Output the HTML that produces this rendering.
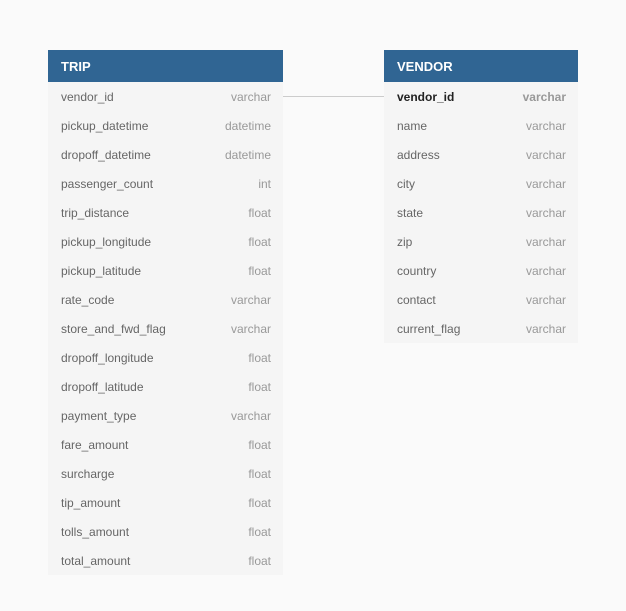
<!DOCTYPE html>
<html><head><style>
body{margin:0;width:626px;height:611px;background:#fafafa;font-family:"Liberation Sans",sans-serif;position:relative;overflow:hidden}
.t{position:absolute;top:50px;background:#f5f5f5}
.h{height:32px;background:#306593;color:#fff;font-weight:bold;font-size:13px;line-height:34px;padding-left:13px}
.r{height:29px;line-height:31px;font-size:12px;color:#666;padding:0 12px 0 13px;display:flex;justify-content:space-between}
.r span:last-child{color:#999}
.k{color:#222!important;font-weight:bold}
.k span:last-child{color:#999}
</style></head><body>
<div style="position:absolute;left:283px;top:96px;width:101px;height:1px;background:#ccc"></div>
<div class="t" style="left:48px;width:235px">
<div class="h">TRIP</div>
<div class="r"><span>vendor_id</span><span>varchar</span></div>
<div class="r"><span>pickup_datetime</span><span>datetime</span></div>
<div class="r"><span>dropoff_datetime</span><span>datetime</span></div>
<div class="r"><span>passenger_count</span><span>int</span></div>
<div class="r"><span>trip_distance</span><span>float</span></div>
<div class="r"><span>pickup_longitude</span><span>float</span></div>
<div class="r"><span>pickup_latitude</span><span>float</span></div>
<div class="r"><span>rate_code</span><span>varchar</span></div>
<div class="r"><span>store_and_fwd_flag</span><span>varchar</span></div>
<div class="r"><span>dropoff_longitude</span><span>float</span></div>
<div class="r"><span>dropoff_latitude</span><span>float</span></div>
<div class="r"><span>payment_type</span><span>varchar</span></div>
<div class="r"><span>fare_amount</span><span>float</span></div>
<div class="r"><span>surcharge</span><span>float</span></div>
<div class="r"><span>tip_amount</span><span>float</span></div>
<div class="r"><span>tolls_amount</span><span>float</span></div>
<div class="r"><span>total_amount</span><span>float</span></div>
</div>
<div class="t" style="left:384px;width:194px">
<div class="h">VENDOR</div>
<div class="r k"><span>vendor_id</span><span>varchar</span></div>
<div class="r"><span>name</span><span>varchar</span></div>
<div class="r"><span>address</span><span>varchar</span></div>
<div class="r"><span>city</span><span>varchar</span></div>
<div class="r"><span>state</span><span>varchar</span></div>
<div class="r"><span>zip</span><span>varchar</span></div>
<div class="r"><span>country</span><span>varchar</span></div>
<div class="r"><span>contact</span><span>varchar</span></div>
<div class="r"><span>current_flag</span><span>varchar</span></div>
</div>
</body></html>
